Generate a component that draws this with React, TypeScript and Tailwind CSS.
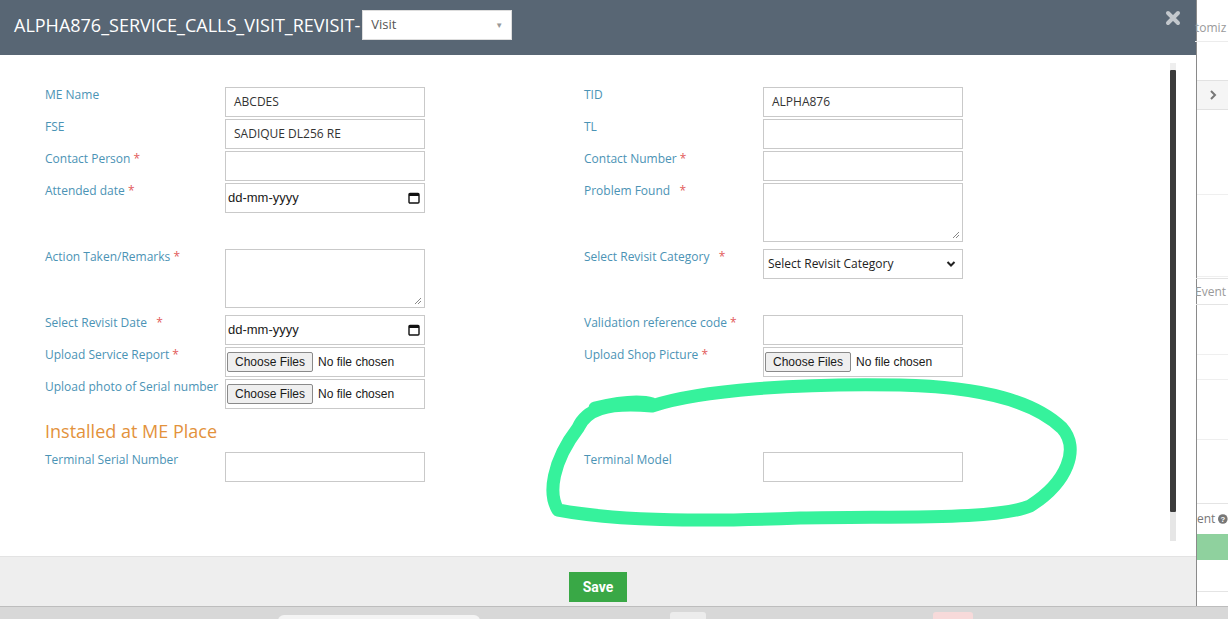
import type { ReactNode } from "react";

const LABEL = "text-[12px] leading-[16px] text-[#4b93b5]";
const FONT = { fontFamily: "'Open Sans', sans-serif" };

function Req() {
  return <span className="text-[#e25b5b]"> *</span>;
}

function TextBox({ value = "" }: { value?: string }) {
  return (
    <div className="h-[30px] w-[200px] border border-[#c9c9c9] bg-white pl-[8px] text-[12px] leading-[28px] text-[#333]">
      {value}
    </div>
  );
}

function Area() {
  return (
    <div className="relative h-[59px] w-[200px] border border-[#c9c9c9] bg-white">
      <svg className="absolute bottom-[2px] right-[2px]" width="8" height="8" viewBox="0 0 8 8">
        <path d="M7 1L1 7M7 4L4 7" stroke="#888" strokeWidth="1" />
      </svg>
    </div>
  );
}

function DateBox() {
  return (
    <div
      className="flex h-[30px] w-[200px] items-center justify-between border border-[#c9c9c9] bg-white pl-[2px] pr-[3px] text-[13px] text-[#1a1a1a]"
      style={{ fontFamily: "'Liberation Sans', Arial, sans-serif" }}
    >
      <span>dd-mm-yyyy</span>
      <svg width="14" height="14" viewBox="0 0 14 14">
        <rect x="2" y="2.5" width="10" height="9.5" rx="1" fill="none" stroke="#111" strokeWidth="1.4" />
        <rect x="2" y="2.5" width="10" height="2.5" fill="#111" />
      </svg>
    </div>
  );
}

function FileBox() {
  return (
    <div
      className="flex h-[30px] w-[200px] items-center border border-[#c9c9c9] bg-white pl-[1px] text-[12px] text-[#1a1a1a]"
      style={{ fontFamily: "'Liberation Sans', Arial, sans-serif" }}
    >
      <span className="rounded-[2px] border border-[#8a8a8a] bg-[#efefef] px-[7px] leading-[18px]">Choose Files</span>
      <span className="ml-[5px]">No file chosen</span>
    </div>
  );
}

function SelectBox() {
  return (
    <div className="flex h-[30px] w-[200px] items-center justify-between border border-[#c9c9c9] bg-white pl-[4px] pr-[6px] text-[12px] text-[#222]">
      <span>Select Revisit Category</span>
      <svg width="10" height="8" viewBox="0 0 10 8">
        <path d="M1.5 2L5 5.5L8.5 2" fill="none" stroke="#222" strokeWidth="2" />
      </svg>
    </div>
  );
}

function Field({ label, control, w }: { label?: ReactNode; control?: ReactNode; w: string }) {
  return (
    <div className={`flex ${w}`}>
      <div className={`${LABEL} ${w === "w-[539px]" ? "w-[180px]" : "w-[179px]"}`}>{label}</div>
      {control}
    </div>
  );
}

function Row({ h, left, right }: { h: string; left: [ReactNode?, ReactNode?]; right: [ReactNode?, ReactNode?] }) {
  return (
    <div className={`flex ${h}`}>
      <Field w="w-[539px]" label={left[0]} control={left[1]} />
      <Field w="w-[400px]" label={right[0]} control={right[1]} />
    </div>
  );
}

export default function App() {
  return (
    <div className="relative flex h-[619px] w-[1228px] flex-col overflow-hidden bg-white" style={FONT}>
      <div className="flex h-[606px]">
        {/* modal */}
        <div className="flex w-[1196px] flex-col">
          <header className="flex h-[55px] items-start bg-[#586674] pl-[14px] pr-[14px] pt-[10px]">
            <h1 className="text-[18px] leading-[30px] text-white">ALPHA876_SERVICE_CALLS_VISIT_REVISIT-</h1>
            <div className="ml-[2px] flex h-[30px] w-[150px] items-center justify-between border border-[#ddd] bg-white pl-[8px] pr-[8px] text-[13px] text-[#555]">
              <span>Visit</span>
              <span className="text-[8px] text-[#999]">▼</span>
            </div>
            <svg className="ml-auto mr-[1px]" width="16" height="16" viewBox="0 0 16 16">
              <path d="M3 3L13 13M13 3L3 13" stroke="#c3c8cd" strokeWidth="4" strokeLinecap="round" />
            </svg>
          </header>

          <div className="relative flex flex-1 bg-white">
            <div className="flex-1 pl-[45px] pt-[32px]">
              <Row h="h-[32px]" left={["ME Name", <TextBox value="ABCDES" />]} right={["TID", <TextBox value="ALPHA876" />]} />
              <Row h="h-[32px]" left={["FSE", <TextBox value="SADIQUE DL256 RE" />]} right={["TL", <TextBox />]} />
              <Row h="h-[32px]" left={[<>Contact Person<Req /></>, <TextBox />]} right={[<>Contact Number<Req /></>, <TextBox />]} />
              <Row h="h-[66px]" left={[<>Attended date<Req /></>, <DateBox />]} right={[<>Problem Found &nbsp;<Req /></>, <Area />]} />
              <Row h="h-[66px]" left={[<>Action Taken/Remarks<Req /></>, <Area />]} right={[<>Select Revisit Category &nbsp;<Req /></>, <SelectBox />]} />
              <Row h="h-[32px]" left={[<>Select Revisit Date &nbsp;<Req /></>, <DateBox />]} right={[<>Validation reference code<Req /></>, <TextBox />]} />
              <Row h="h-[32px]" left={[<>Upload Service Report<Req /></>, <FileBox />]} right={[<>Upload Shop Picture<Req /></>, <FileBox />]} />
              <Row h="h-[32px]" left={["Upload photo of Serial number", <FileBox />]} right={[]} />
              <div className="h-[41px] pt-[9px] text-[18px] leading-[22px] text-[#e3923c]">Installed at ME Place</div>
              <Row h="h-[32px]" left={["Terminal Serial Number", <TextBox />]} right={["Terminal Model", <TextBox />]} />
            </div>
            {/* scrollbar */}
            <div className="mr-[20px] mt-[8px] flex h-[478px] w-[6px] flex-col">
              <div className="h-[7px] bg-[#eeeeee]" />
              <div className="h-[442px] rounded-[1px] bg-[#3b3b3b]" />
              <div className="flex-1 bg-[#e6e6e6]" />
            </div>
          </div>

          <footer className="flex h-[50px] items-start justify-center border-t border-[#e3e3e3] bg-[#eeeeee] pt-[15px]">
            <button className="h-[30px] w-[58px] bg-[#39a846] text-[14px] font-bold text-white" style={{ fontFamily: "'Liberation Sans Narrow', 'Roboto', sans-serif" }}>
              Save
            </button>
          </footer>
        </div>

        {/* background page sliver */}
        <div className="flex w-[32px] flex-col border-l border-[#8a8a8a] bg-white text-[12px] text-[#9a9a9a]">
          <div className="h-[42px] border-b border-[#ececec] pt-[20px] leading-[16px] -ml-[2px]">tomiz</div>
          <div className="mt-[38px] flex h-[30px] items-center justify-center border-y border-[#e2e2e2] bg-[#f5f5f5] text-[#777]">
            <svg width="10" height="12" viewBox="0 0 10 12">
              <path d="M3 2L7 6L3 10" fill="none" stroke="#777" strokeWidth="2" />
            </svg>
          </div>
          <div className="mt-[55px] h-[30px] border-b border-[#efefef]" />
          <div className="h-[82px] border-b border-[#efefef]" />
          <div className="mt-[1px] h-[27px] border-y border-[#e4e4e4] leading-[25px] -ml-[2px]">Event</div>
          <div className="h-[50px] border-b border-[#efefef]" />
          <div className="h-[25px] border-b border-[#efefef]" />
          <div className="h-[60px] border-b border-[#efefef]" />
          <div className="h-[64px] border-b border-[#e4e4e4]" />
          <div className="flex h-[30px] items-center gap-[3px] leading-[14px] text-[#777]">
            <span>ent</span>
            <svg width="10" height="10" viewBox="0 0 10 10">
              <circle cx="5" cy="5" r="5" fill="#777" />
              <text x="5" y="8.3" textAnchor="middle" fontSize="8" fontWeight="bold" fill="#fff" fontFamily="'Liberation Sans', sans-serif">?</text>
            </svg>
          </div>
          <div className="h-[26px] bg-[#8fd19e]" />
          <div className="h-[32px] border-b border-[#e4e4e4]" />
        </div>
      </div>

      {/* bottom strip */}
      <div className="relative h-[13px] border-t border-[#bdbdbd] bg-[#d8d8d8]">
        <div className="absolute left-[278px] top-[8px] h-[8px] w-[202px] rounded-t-[6px] bg-[#f4f4f4]" />
        <div className="absolute left-[670px] top-[5px] h-[10px] w-[36px] rounded-t-[3px] bg-[#ececec]" />
        <div className="absolute left-[933px] top-[5px] h-[10px] w-[40px] rounded-t-[3px] bg-[#f7dada]" />
      </div>

      {/* hand-drawn annotation */}
      <svg className="pointer-events-none absolute left-0 top-0" width="1228" height="619" viewBox="0 0 1228 619">
        <path
          d="M578 428 C586 410 605 402 652 406 C700 390 800 383 900 385 C985 387 1035 402 1062 428 C1080 448 1068 482 1030 506 C996 520 900 516 800 518 C700 522 610 520 558 510 C548 494 552 462 578 428 Z M595 408 C620 402 640 400 652 404"
          fill="none"
          stroke="#36f29c"
          strokeWidth="13"
          strokeLinecap="round"
          strokeLinejoin="round"
        />
      </svg>
    </div>
  );
}
